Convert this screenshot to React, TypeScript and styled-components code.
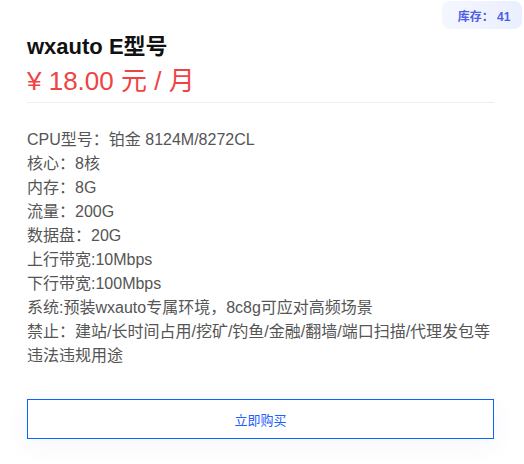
import React from "react";
import styled, { createGlobalStyle } from "styled-components";

const GlobalStyle = createGlobalStyle`
  body {
    margin: 0;
    background: #ffffff;
    font-family: "Liberation Sans", Arial, "Noto Sans CJK SC", sans-serif;
  }
`;

const Card = styled.div`
  position: relative;
  width: 524px;
  height: 464px;
  box-sizing: border-box;
  padding: 32px 30px 0 27px;
  background: #fff;
  display: flex;
  flex-direction: column;
`;

const StockBadge = styled.div`
  position: absolute;
  top: 1px;
  right: 2px;
  width: 80px;
  height: 28px;
  display: flex;
  align-items: center;
  justify-content: center;
  padding-left: 4px;
  box-sizing: border-box;
  border-radius: 8px;
  background: linear-gradient(90deg, #f5f7ff 0%, #eaefff 100%);
  color: #4f5de6;
  font-size: 12px;
  font-weight: 700;
  white-space: pre;
`;

const Title = styled.h2`
  margin: 0;
  font-size: 22px;
  line-height: 30px;
  font-weight: 700;
  color: #111;
`;

const Price = styled.div`
  margin-top: 2px;
  padding-bottom: 4px;
  font-size: 26px;
  line-height: 34px;
  color: #f04343;
  border-bottom: 1px solid #eeeeee;
`;

const SpecList = styled.div`
  margin-top: 25px;
  display: flex;
  flex-direction: column;
`;

const SpecLine = styled.div`
  font-size: 16px;
  line-height: 24px;
  color: #555;
`;

const BuyButton = styled.button`
  margin-top: 31px;
  height: 40px;
  width: 100%;
  border: 1px solid #0a64ff;
  background: #fff;
  color: #2160ff;
  font-family: "Liberation Sans", Arial, "Noto Sans CJK SC", sans-serif;
  font-size: 13px;
  cursor: pointer;
  box-shadow: 0 6px 24px rgba(40, 80, 200, 0.05);
`;

const specs = [
  "CPU型号：铂金 8124M/8272CL",
  "核心：8核",
  "内存：8G",
  "流量：200G",
  "数据盘：20G",
  "上行带宽:10Mbps",
  "下行带宽:100Mbps",
  "系统:预装wxauto专属环境，8c8g可应对高频场景",
  "禁止：建站/长时间占用/挖矿/钓鱼/金融/翻墙/端口扫描/代理发包等违法违规用途",
];

const App = () => {
  return (
    <>
      <GlobalStyle />
      <Card>
        <StockBadge>{"库存： 41"}</StockBadge>
        <Title>wxauto E型号</Title>
        <Price>¥ 18.00 元 / 月</Price>
        <SpecList>
          {specs.map((s) => (
            <SpecLine key={s}>{s}</SpecLine>
          ))}
        </SpecList>
        <BuyButton>立即购买</BuyButton>
      </Card>
    </>
  );
};

export default App;
